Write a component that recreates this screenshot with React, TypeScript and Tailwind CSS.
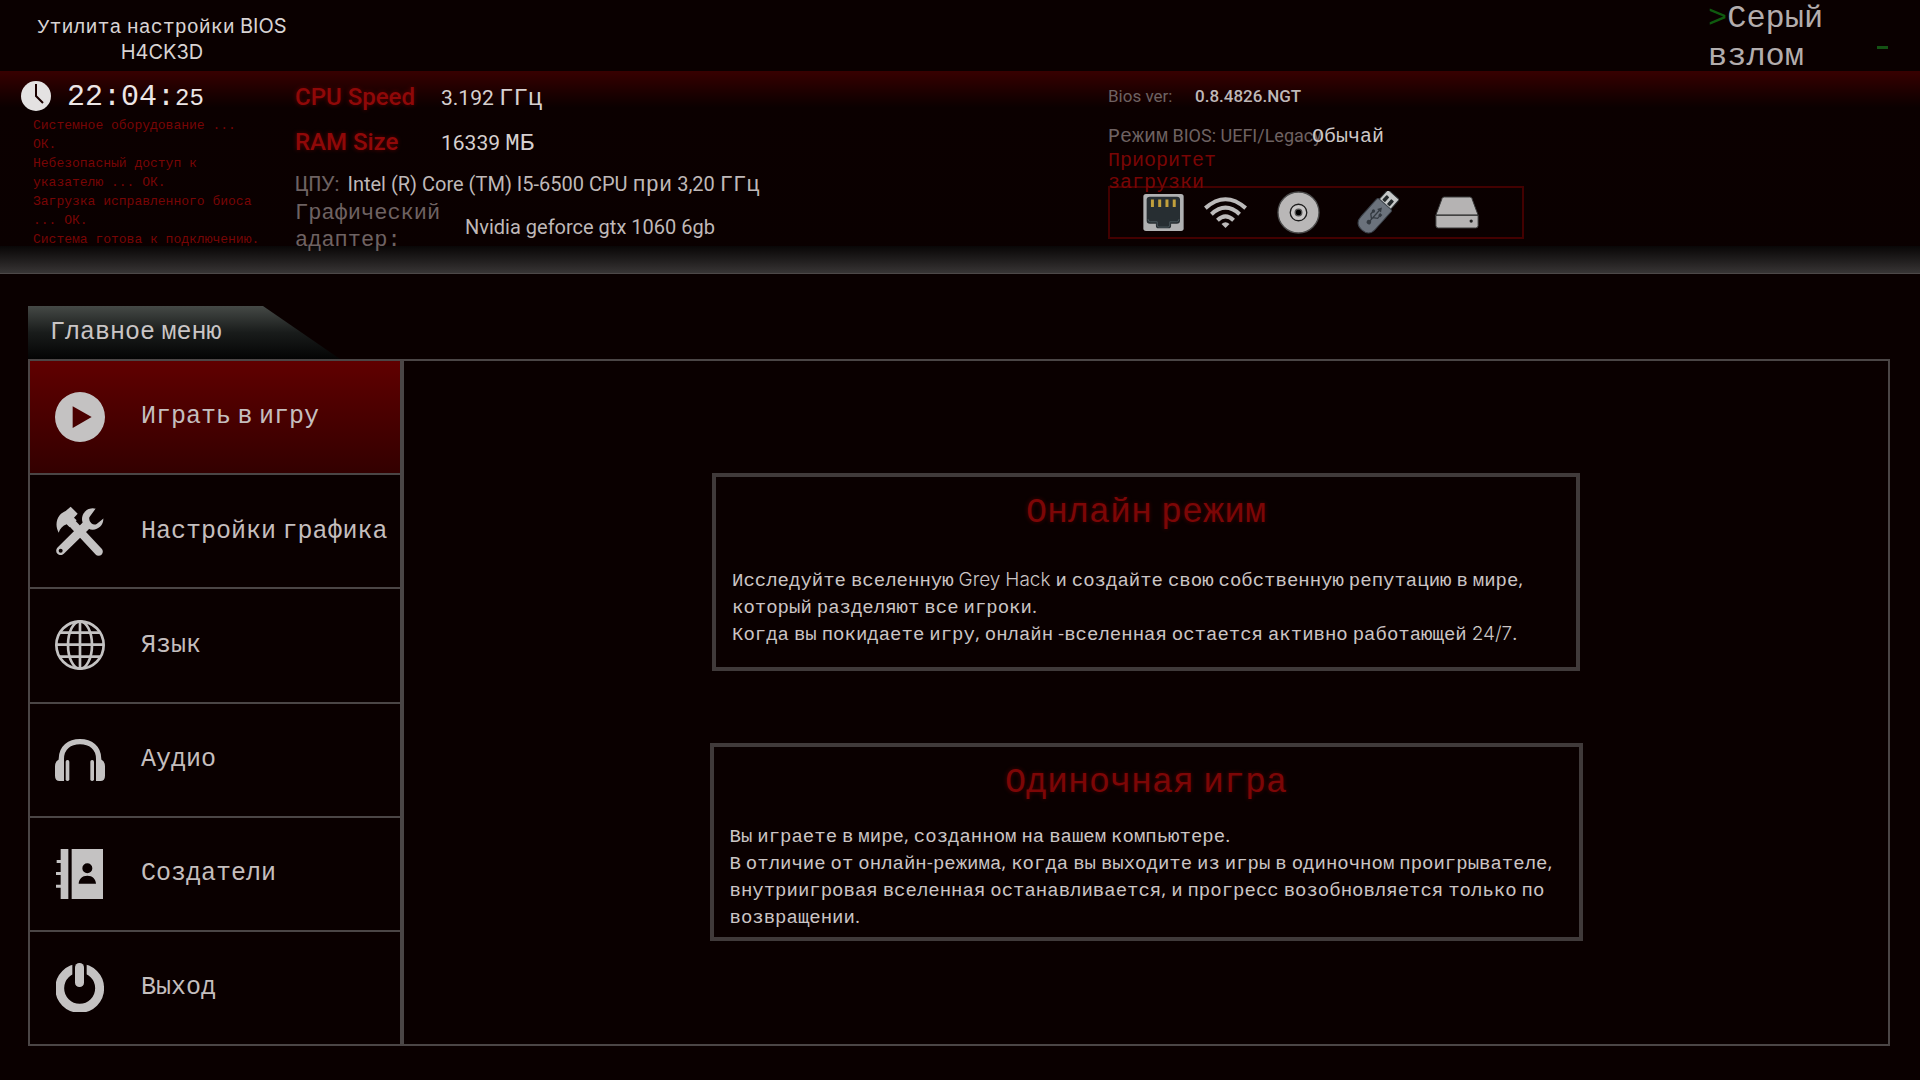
import React, { useState } from 'react';

const isCyrillic = /[\u0400-\u04FF]/;
const isWord = /[\w/]/;

// Cyrillic stays in the mono face, latin words use the UI face, spaces and punctuation a narrower one
const Mixed: React.FC<{ text: string; latin?: string; rest?: string }> = ({
    text,
    latin = 'font-[Inter,sans-serif]',
    rest = "font-['Open_Sans',sans-serif]",
}) => (
    <>
        {text.split(/([\u0400-\u04FF]+|[\w/]+)/).filter(Boolean).map((part, i) =>
            isCyrillic.test(part)
                ? part
                : <span key={i} className={`leading-none ${isWord.test(part) ? latin : rest}`}>{part}</span>
        )}
    </>
);

const PlayIcon = () => (
    <svg viewBox="0 0 150 150" className="w-[50px] h-[50px]" fill="currentColor">
        <path fillRule="evenodd" d="M75 0a75 75 0 1 0 0 150a75 75 0 1 0 0-150zM53 43l57 32-57 33z" />
    </svg>
);

const ToolsIcon = () => (
    <svg viewBox="0 0 150 150" className="w-[50px] h-[50px]" fill="currentColor">
        <mask id="wrench">
            <rect width="150" height="150" fill="#fff" />
            <circle cx="17" cy="134" r="6" fill="#000" />
            <path d="M103 34q-2 12 6 18t16 2l30-24-26-32z" fill="#000" />
        </mask>
        <g mask="url(#wrench)">
            <path d="M17 134L92 60" stroke="currentColor" strokeWidth="27" strokeLinecap="round" />
            <circle cx="113" cy="39" r="32" />
        </g>
        <path d="M47 2l21 21-11 12 8 8-21 21-9-9c-12 4-20 13-24 25-10-18-8-38 3-52 5-7 12-10 18-13z" />
        <path d="M48 48L131 137" stroke="currentColor" strokeWidth="25" strokeLinecap="round" />
    </svg>
);

const GlobeIcon = () => (
    <svg viewBox="0 0 150 150" className="w-[50px] h-[50px]" fill="none" stroke="currentColor" strokeWidth="8">
        <circle cx="75" cy="75" r="71" />
        <ellipse cx="75" cy="75" rx="36" ry="71" />
        <path d="M75 4v142M4 74h142M15 38h120M15 110h120" />
    </svg>
);

const HeadphonesIcon = () => (
    <svg viewBox="0 -12 150 150" className="w-[50px] h-[50px]" fill="currentColor">
        <path d="M19 68v-8C19 26 44 8 75 8s56 18 56 52v8" fill="none" stroke="currentColor" strokeWidth="16" />
        <path d="M27 62v64H14Q0 126 0 110V82Q0 68 10 62zM123 62v64h13q14 0 14-16V82q0-14-10-20z" />
        <rect x="32" y="63" width="11" height="63" rx="5" />
        <rect x="106" y="63" width="11" height="63" rx="5" />
    </svg>
);

const ContactsIcon = () => (
    <svg viewBox="0 0 150 150" className="w-[50px] h-[50px]" fill="currentColor">
        <path d="M17 0h23v150H17zM5 33h12v9H5zM3 69h14v9H3zM3 107h14v9H3z" />
        <path fillRule="evenodd" d="M50 0h94v150H50zM97 43a15 15 0 1 0 0 30a15 15 0 1 0 0-30zM71 104h52c-1-14-10-24-26-24s-25 10-26 24z" />
    </svg>
);

const PowerIcon = () => (
    <svg viewBox="0 0 150 150" className="w-[50px] h-[50px]" fill="currentColor">
        <mask id="power-gap">
            <rect width="150" height="150" fill="#fff" />
            <rect x="52" width="43" height="60" fill="#000" />
        </mask>
        <circle cx="74" cy="76" r="60" fill="none" stroke="currentColor" strokeWidth="27" mask="url(#power-gap)" />
        <rect x="60" y="0" width="27" height="72" rx="13" />
    </svg>
);

const ClockIcon = () => (
    <svg viewBox="0 0 30 30" className="w-[30px] h-[30px]">
        <circle cx="15" cy="15" r="15" fill="#e4e2e2" />
        <path d="M15 3v12l7 7" fill="none" stroke="#1a0000" strokeWidth="2" />
    </svg>
);

const EthernetIcon = () => (
    <svg viewBox="0 0 122 112" className="w-[41px] h-[37px]">
        <rect width="122" height="112" rx="8" fill="#b0b1b2" />
        <path d="M20 8h82q9 0 9 9v63q0 10-10 10H84v6q0 8-8 8H46q-8 0-8-8v-6H20q-10 0-10-10V17q0-9 10-9z" fill="#272e32" />
        <path d="M14 76q0 8 8 8h20v10q0 6 6 6h26q6 0 6-6V84h20q8 0 8-8" fill="none" stroke="#48555a" strokeWidth="3" />
        <path d="M23 17h9v22h-9zM45 17h9v22h-9zM67 17h9v22h-9zM89 17h9v22h-9z" fill="#c2a03c" />
    </svg>
);

const WifiIcon = () => (
    <svg viewBox="0 0 128 95" className="w-[43px] h-[32px]" fill="none" stroke="#bcbaba" strokeWidth="12">
        <path d="M4 33Q64-20 124 33M22 51Q64 12 106 51M40 69Q64 46 88 69" />
        <path d="M52 80q12-10 24 0L64 92z" fill="#bcbaba" stroke="none" />
    </svg>
);

const DiscIcon = () => (
    <svg viewBox="0 0 130 130" className="w-[43px] h-[43px]">
        <circle cx="65" cy="65" r="62" fill="#b9b7b7" stroke="#4c4c4c" strokeWidth="4" />
        <circle cx="65" cy="65" r="25" fill="#c9c7c7" stroke="#1d1d1d" strokeWidth="4" />
        <circle cx="65" cy="65" r="10" fill="#000" stroke="#555" strokeWidth="4" />
    </svg>
);

const UsbIcon = () => (
    <svg viewBox="0 0 130 130" className="w-[43px] h-[43px]">
        <g transform="rotate(42 65 65)">
            <rect x="42" y="-8" width="46" height="46" rx="3" fill="#c6c8c8" stroke="#2b2f31" strokeWidth="3" />
            <rect x="50" y="7" width="11" height="20" rx="2" fill="#23282a" />
            <rect x="69" y="7" width="11" height="20" rx="2" fill="#23282a" />
            <path d="M36 37q0-6 6-6h46q6 0 6 6v70q0 29-29 29t-29-29z" fill="#6b727c" stroke="#3b4149" strokeWidth="3" />
            <path d="M65 103V54M65 92L53 82V72M65 86l12-8V67" fill="none" stroke="#343a41" strokeWidth="4" />
            <path d="M57 58l8-13 8 13z" fill="#343a41" />
            <circle cx="65" cy="104" r="7" fill="#343a41" />
            <circle cx="53" cy="70" r="5" fill="#343a41" />
            <rect x="72" y="61" width="9" height="9" fill="#343a41" />
        </g>
    </svg>
);

const DriveIcon = () => (
    <svg viewBox="0 0 132 100" className="w-[44px] h-[33px]">
        <path d="M27 3h78q4 0 6 4l19 51v32q0 7-7 7H9q-7 0-7-7V58L21 7q2-4 6-4z" fill="#b5b3b3" stroke="#3a3a3a" strokeWidth="3" />
        <path d="M2 58h128" stroke="#1d1d1d" strokeWidth="4" />
        <circle cx="109" cy="76" r="5" fill="#222" />
    </svg>
);

const menuItems = [
    { id: 'play', label: 'Играть в игру', icon: <PlayIcon /> },
    { id: 'graphics', label: 'Настройки графика', icon: <ToolsIcon /> },
    { id: 'language', label: 'Язык', icon: <GlobeIcon /> },
    { id: 'audio', label: 'Аудио', icon: <HeadphonesIcon /> },
    { id: 'credits', label: 'Создатели', icon: <ContactsIcon /> },
    { id: 'exit', label: 'Выход', icon: <PowerIcon /> },
];

const bootLog = [
    'Системное оборудование ...',
    'ОК.',
    'Небезопасный доступ к',
    'указателю ... ОК.',
    'Загрузка исправленного биоса',
    '... ОК.',
    'Система готова к подключению.',
];

const label = 'w-[146px] text-2xl font-[Roboto,sans-serif] font-medium text-[#8f0808] [text-shadow:0_0_4px_#5a0000]';
const big = 'text-[21px] font-[Roboto,sans-serif]';
const medium = 'text-xl font-[Roboto,sans-serif]';
const small = 'text-lg font-[Roboto,sans-serif]';

const SystemInfo: React.FC = () => (
    <section className="grid grid-cols-[295fr_813fr_812fr] bg-linear-to-b from-[#380000] via-[#0b0000] via-20% to-[#0a0000]">
        <div className="pt-1">
            <div className="flex items-center pl-[21px] pt-px h-10">
                <ClockIcon />
                <time className="ml-4 pt-1 text-[30px] text-[#ece6e6]">22:04:<span className="text-2xl">25</span></time>
            </div>
            <div className="pl-[33px] pt-px text-[13px] leading-[19px] text-[#780505] whitespace-nowrap">
                {bootLog.map(line => <p key={line}>{line}</p>)}
            </div>
        </div>

        <div className="pt-1 text-[22px] text-[#bfb8b8] whitespace-nowrap">
            <div className="flex items-baseline h-[45px] text-2xl">
                <span className={`leading-[45px] ${label}`}>CPU Speed</span>
                <span className="text-[#d6d0d0]"><Mixed text="3.192 ГГц" latin={big} rest={big} /></span>
            </div>
            <div className="flex items-baseline h-12 text-2xl">
                <span className={`leading-[45px] ${label}`}>RAM Size</span>
                <span className="text-[#d6d0d0]"><Mixed text="16339 МБ" latin={big} rest={big} /></span>
            </div>
            <div className="flex items-baseline gap-2 h-8 leading-[36px]">
                <span className="text-[#6e6262]"><Mixed text="ЦПУ:" latin={medium} rest={medium} /></span>
                <span><Mixed text="Intel (R) Core (TM) I5-6500 CPU при 3,20 ГГц" latin={medium} rest={medium} /></span>
            </div>
            <div className="flex items-center">
                <span className="w-[170px] leading-[27px] text-[#6e6262]">Графический<br />адаптер:</span>
                <span className={medium}>Nvidia geforce gtx 1060 6gb</span>
            </div>
        </div>

        <div className="pt-2 text-xl text-[#6e6262] whitespace-nowrap">
            <div className="flex text-[17px] leading-[35px] font-[Roboto,sans-serif]">
                <span className="w-[87px]">Bios ver:</span>
                <span className="font-medium text-[#bfb8b8]">0.8.4826.NGT</span>
            </div>
            <div className="flex pt-[5px] leading-[35px]">
                <span className="w-[204px]"><Mixed text="Режим BIOS: UEFI/Legacy" latin={small} rest={small} /></span>
                <span className="text-[#cdc7c7]">Обычай</span>
            </div>
            <p className="-mt-1 leading-[22px] text-[#780505]">Приоритет<br />загрузки</p>
            <div className="flex items-center w-[416px] max-w-full h-[53px] -mt-2 pl-[33px] border-2 border-[#430000]">
                <EthernetIcon />
                <span className="ml-5"><WifiIcon /></span>
                <span className="ml-[30px]"><DiscIcon /></span>
                <span className="ml-9"><UsbIcon /></span>
                <span className="ml-9"><DriveIcon /></span>
            </div>
        </div>
    </section>
);

interface ModeCardProps {
    title: string;
    lines: string[];
    className: string;
    textClassName: string;
}

const ModeCard: React.FC<ModeCardProps> = ({ title, lines, className, textClassName }) => (
    <button className={`border-4 border-[#403a3a] px-4 text-left cursor-pointer min-h-[198px] flex flex-col ${className}`}>
        <span className="block w-full pt-[14px] text-center text-[35px] leading-10 text-[#7c0606] [text-shadow:0_0_4px_#4a0000]">
            <Mixed text={title} />
        </span>
        <span className={`block text-[19px] leading-[27px] text-[#cbc5c5] ${textClassName}`}>
            {lines.map(line => (
                <span key={line} className="block"><Mixed text={line} latin="font-[Inter,sans-serif] font-light" /></span>
            ))}
        </span>
    </button>
);

const App: React.FC = () => {
    const [active, setActive] = useState('play');

    return (
        <div className="min-h-screen flex flex-col bg-[#0a0000] font-['Liberation_Mono',monospace]">
            <header>
                <div className="flex justify-between h-[71px]">
                    <h1 className="w-[324px] pt-[15px] text-center text-xl leading-[26px] text-[#d8d3d3]">
                        <Mixed text="Утилита настройки BIOS" /><br /><Mixed text="H4CK3D" />
                    </h1>
                    <div className="flex w-[212px] justify-between pr-8 text-[32px] leading-[38px] text-[#b3adad]">
                        <p><span className="text-[#0f5a0f]">&gt;</span>Серый<br />взлом</p>
                        <span className="w-[11px] h-[3px] mt-[46px] bg-[#145214]" />
                    </div>
                </div>
                <SystemInfo />
                <div className="h-7 -mt-2 bg-linear-to-b from-[#090707] to-[#383535] border-b border-[#4d4848]" />
            </header>

            <main className="flex flex-col flex-1 pt-8 pb-[34px] pl-7 pr-[30px]">
                <div className="relative w-[312px] h-[53px]">
                    <svg viewBox="0 0 312 53" preserveAspectRatio="none" className="absolute inset-0 w-full h-full">
                        <defs>
                            <linearGradient id="tab" x1="0" y1="0" x2="0" y2="1">
                                <stop offset="0" stopColor="#454946" />
                                <stop offset="0.5" stopColor="#191c1b" />
                                <stop offset="1" stopColor="#040404" />
                            </linearGradient>
                        </defs>
                        <path d="M0 0h235l77 53H0z" fill="url(#tab)" />
                    </svg>
                    <h2 className="relative pl-[22px] text-[25px] leading-[53px] text-[#c9c5c5]"><Mixed text="Главное меню" /></h2>
                </div>

                <div className="flex flex-1 border-2 border-[#4b4646]">
                    <nav className="flex flex-col w-[374px] shrink-0 border-r-4 border-[#4b4646] divide-y-2 divide-[#4b4646]">
                        {menuItems.map(item => (
                            <button
                                key={item.id}
                                onClick={() => setActive(item.id)}
                                className={`flex flex-1 items-center gap-9 pl-[25px] text-[25px] text-[#c4bebe] whitespace-nowrap cursor-pointer ${active === item.id ? 'bg-linear-to-b from-[#600000] to-[#330000]' : ''}`}
                            >
                                <span className="text-[#c4c2c2]">{item.icon}</span>
                                <span><Mixed text={item.label} /></span>
                            </button>
                        ))}
                    </nav>

                    <div className="flex flex-1 flex-col items-center gap-[72px] pt-28">
                        <ModeCard
                            title="Онлайн режим"
                            className="w-[868px]"
                            textClassName="pt-[35px]"
                            lines={[
                                'Исследуйте вселенную Grey Hack и создайте свою собственную репутацию в мире, который разделяют все игроки.',
                                'Когда вы покидаете игру, онлайн -вселенная остается активно работающей 24/7.',
                            ]}
                        />
                        <ModeCard
                            title="Одиночная игра"
                            className="w-[873px]"
                            textClassName="pt-[21px]"
                            lines={[
                                'Вы играете в мире, созданном на вашем компьютере.',
                                'В отличие от онлайн-режима, когда вы выходите из игры в одиночном проигрывателе, внутриигровая вселенная останавливается, и прогресс возобновляется только по возвращении.',
                            ]}
                        />
                    </div>
                </div>
            </main>
        </div>
    );
};

export default App;
